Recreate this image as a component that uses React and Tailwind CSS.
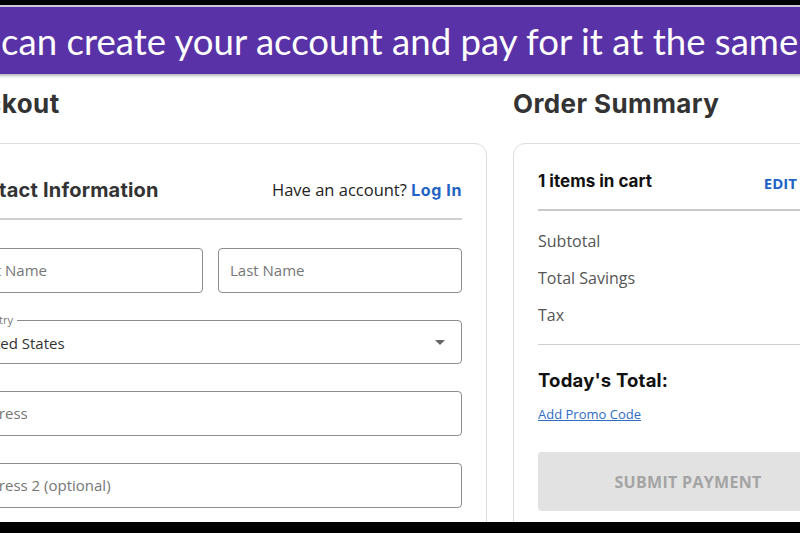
import { useState } from "react";

function Field({ placeholder, className = "" }) {
  return (
    <div
      className={
        "h-[45px] border border-[#8c8c8c] rounded-[4px] flex items-center px-[11px] text-[15px] text-[#767676] " +
        className
      }
    >
      {placeholder}
    </div>
  );
}

export default function App() {
  const [country] = useState("United States");

  return (
    <div className="w-[800px] h-[533px] overflow-hidden bg-white flex flex-col font-['Open_Sans',sans-serif]">
      {/* top frame */}
      <div className="h-[5px] bg-black shrink-0" />
      <div className="h-[2px] bg-[#cfc9dc] shrink-0" />

      {/* caption banner */}
      <div className="h-[67px] shrink-0 bg-[#5932a7] flex items-center overflow-hidden">
        <p className="relative ml-[1px] whitespace-nowrap text-white text-[36.6px] font-['Lato',sans-serif] pt-[1px]">
          <span className="absolute right-full">You&nbsp;</span>
          can create your account and pay for it at the same time.
        </p>
      </div>
      <div className="h-[4px] shrink-0 bg-gradient-to-b from-[#b9b9b9] to-white" />

      {/* page content */}
      <div className="flex-1 overflow-hidden">
        <div className="ml-[-66px] flex gap-[26px] items-start">
          {/* checkout column */}
          <div className="w-[553px] shrink-0">
            <h1 className="mt-[10px] h-[32px] leading-[32px] text-[26px] tracking-[0.4px] font-bold text-[#333] font-['Inter',sans-serif]">
              Checkout
            </h1>
            <div className="mt-[23px] border border-[#dedede] rounded-xl px-[24px] pt-[34px] pb-[30px]">
              <div className="h-[24px] flex items-center justify-between">
                <h2 className="text-[20px] tracking-[0.2px] font-bold text-[#333] font-['Inter',sans-serif]">
                  Contact Information
                </h2>
                <p className="text-[16.5px] text-[#222]">
                  Have an account?{" "}
                  <span className="text-[16px] tracking-[0.6px] font-bold text-[#1f63c4] font-['Inter',sans-serif]">
                    Log In
                  </span>
                </p>
              </div>
              <div className="mt-[16px] h-[2px] bg-[#cfcfcf]" />

              <div className="mt-[28px] flex flex-col gap-[27px]">
                <div className="grid grid-cols-2 gap-[15px]">
                  <Field placeholder="First Name" />
                  <Field placeholder="Last Name" className="px-[10px]" />
                </div>

                <div className="relative h-[44px] border border-[#8c8c8c] rounded-[4px] flex items-center justify-between pl-[11px] pr-[16px]">
                  <span className="absolute -top-[9px] left-[8px] bg-white px-[4px] text-[11px] text-[#777]">
                    Country
                  </span>
                  <span className="text-[15px] text-[#333] pt-[2px]">{country}</span>
                  <svg width="10" height="5" viewBox="0 0 10 5">
                    <path d="M0 0h10L5 5z" fill="#666" />
                  </svg>
                </div>

                <Field placeholder="Address" />
                <Field placeholder="Address 2 (optional)" />
              </div>
            </div>
          </div>

          {/* order summary column */}
          <div className="w-[350px] shrink-0">
            <h1 className="mt-[10px] h-[32px] leading-[32px] text-[26px] tracking-[0.4px] font-bold text-[#333] font-['Inter',sans-serif]">
              Order Summary
            </h1>
            <div className="mt-[23px] border border-[#dedede] rounded-xl px-[24px] pt-[26px] pb-[30px]">
              <div className="h-[24px] flex items-center justify-between">
                <span className="text-[17px] font-bold text-[#111] font-['Inter',sans-serif]">
                  1 items in cart
                </span>
                <span className="mr-[41px] mt-[3px] text-[15px] font-bold text-[#1f63c4]">EDIT</span>
              </div>
              <div className="mt-[15px] h-[2px] bg-[#c9c9c9]" />

              <div className="mt-[11px] flex flex-col text-[16px] text-[#555]">
                <div className="h-[37px] flex items-center">Subtotal</div>
                <div className="h-[37px] flex items-center">Total Savings</div>
                <div className="h-[37px] flex items-center">Tax</div>
              </div>
              <div className="mt-[11px] h-px bg-[#cfcfcf]" />

              <div className="mt-[24px] h-[24px] flex items-center text-[18.5px] tracking-[0.2px] font-bold text-[#111] font-['Inter',sans-serif]">
                Today's Total:
              </div>
              <div className="mt-[12px] h-[20px] flex items-center">
                <a className="text-[13px] text-[#2f6cc2] underline">Add Promo Code</a>
              </div>
              <button className="mt-[27px] w-full h-[59px] rounded-[4px] bg-[#e2e2e2] text-[16px] font-bold tracking-[0.3px] text-[#a4a4a4]">
                SUBMIT PAYMENT
              </button>
            </div>
          </div>
        </div>
      </div>

      {/* bottom frame */}
      <div className="h-[11px] bg-black shrink-0" />
    </div>
  );
}
